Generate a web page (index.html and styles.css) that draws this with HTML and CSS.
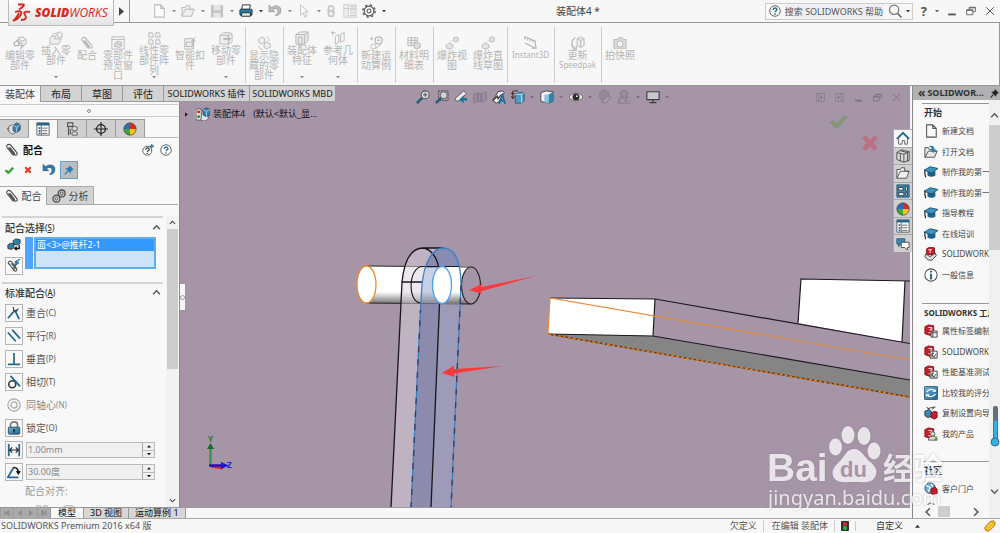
FILE: index.html
```html
<!DOCTYPE html>
<html lang="zh-CN">
<head>
<meta charset="utf-8">
<title>装配体4 *</title>
<link rel="stylesheet" href="styles.css">
</head>
<body>
<svg class="defs" aria-hidden="true">
  <defs>
    <linearGradient id="steel" x1="0" y1="0" x2="1" y2="1"><stop offset="0" stop-color="#6fb7dc"/><stop offset="1" stop-color="#1c6288"/></linearGradient>
    <symbol id="caret" viewBox="0 0 6 6"><path d="M0 1.500h6L3 5z" fill="currentColor"/></symbol>
    <symbol id="doc" viewBox="0 0 16 16"><path d="M3 1h7l4 4v10H3zM10 1v4h4" fill="#fbfbfb" stroke="currentColor" stroke-width="1.200"/></symbol>
    <symbol id="open" viewBox="0 0 16 16"><path d="M1 14V4h4l1-2h4v4h5l-3 8zM1 14l4-8h10" fill="#eee" stroke="currentColor" stroke-width="1.100"/></symbol>
    <symbol id="open-blue" viewBox="0 0 16 16"><path d="M1 14V3h4l1 2h5v2h4l-3 7zM1 14l4-7h10" fill="#e8e8e8" stroke="#555" stroke-width="1.100"/><path d="M6 1c4-1 6 1 6 4h2l-3 4-4-4h2c0-2-1-3-3-3z" fill="#2a7fae"/></symbol>
    <symbol id="save" viewBox="0 0 16 16"><path d="M1 1h13l1 1v13H1z" fill="#c2c2c2"/><path d="M4 1h8v6H4zM4 10h8v5H4z" fill="#e6e6e6"/></symbol>
    <symbol id="print" viewBox="0 0 16 16"><path d="M4 1h9l-1 5H3z" fill="#fff" stroke="#222"/><rect x="1" y="6" width="14" height="7" rx="1" fill="#2b7ba3" stroke="#173f55"/><path d="M3 10h10v4H3z" fill="#dfe7eb" stroke="#222"/></symbol>
    <symbol id="undo" viewBox="0 0 16 16"><path d="M1 1v8h7L5.500 6.500C9 4 12 6 11 9c-.5 2-1.500 3-3 4 4 1 7-2 7-6C15 2 9 0 4 4z" fill="currentColor" stroke="#0003"/></symbol>
    <symbol id="cursor" viewBox="0 0 16 16"><path d="M4 1v12l3-3 2 5 2-1-2-5h4z" fill="#fafafa" stroke="currentColor"/></symbol>
    <symbol id="lamp" viewBox="0 0 16 16"><rect x="4" y="1" width="8" height="14" rx="4" fill="#c8c8c8"/><circle cx="8" cy="5" r="2.200" fill="#eee"/><circle cx="8" cy="11" r="2.200" fill="#eee"/></symbol>
    <symbol id="list-gray" viewBox="0 0 16 16"><path d="M1 1h14v14H1zM6 1v14M1 5h14" fill="none" stroke="#c4c4c4"/><path d="M3 7h1M3 10h1M3 13h1M8 7h6M8 10h6M8 13h6M8 3h6" stroke="#bbb"/></symbol>
    <symbol id="gear" viewBox="0 0 16 16"><circle cx="8" cy="8" r="5.500" fill="none" stroke="#555" stroke-width="1.300"/><circle cx="8" cy="8" r="7" fill="none" stroke="#555" stroke-width="1.600" stroke-dasharray="2.700 2.800"/><circle cx="8" cy="8" r="2.200" fill="none" stroke="#555" stroke-width="1.200"/></symbol>
    <symbol id="help" viewBox="0 0 16 16"><circle cx="8" cy="8" r="7" fill="#fff" stroke="#555" stroke-width="1.200"/><path d="M5.500 6.500c0-3.300 5-3.300 5-.5 0 1.800-2.400 1.800-2.400 3.700M8 11v2" fill="none" stroke="currentColor" stroke-width="1.900"/></symbol>
    <symbol id="help-new" viewBox="0 0 16 16"><circle cx="7" cy="9" r="6" fill="#fff" stroke="#555" stroke-width="1.200"/><path d="M5 7.500c0-3 4.500-3 4.500-.3 0 1.500-2.300 1.500-2.300 3.300M7 11.800v1.600" fill="none" stroke="#333" stroke-width="1.600"/><path d="M13 0v6M10 3h6" stroke="#2a7fae" stroke-width="1.800"/></symbol>
    <symbol id="search" viewBox="0 0 16 16"><circle cx="7" cy="6.500" r="5.300" fill="none" stroke="#777" stroke-width="1.400"/><path d="M10.500 10.500l5 5" stroke="#777" stroke-width="2"/></symbol>
    <symbol id="min" viewBox="0 0 16 16"><path d="M2 12h12v3H2z" fill="currentColor"/></symbol>
    <symbol id="restore" viewBox="0 0 16 16"><path d="M5 6V2h10v7h-4M1 6h10v8H1zM5 3h10M1 7h10" fill="none" stroke="currentColor" stroke-width="1.300"/></symbol>
    <symbol id="close" viewBox="0 0 16 16"><path d="M2 2l12 12M14 2L2 14" stroke="currentColor" stroke-width="1.600"/></symbol>
    <symbol id="clip" viewBox="0 0 16 16"><path d="M4 5l6.500 8c2 2 4.500 0 3-2L7 3C4.500 0 .5 2.500 2.500 5.500l6 7.500c1 1.500 3 0 2-1.500L5.500 5" fill="none" stroke="currentColor" stroke-width="1.200"/></symbol>
    <symbol id="r-edit" viewBox="0 0 16 16"><path d="M6 2l5-1 4 3v5l-5 3-4-3zM6 3l4 3 5-2M10 6v6" fill="#eee" stroke="currentColor"/><path d="M1 8l4-3 3 3-2 3H2zM8 15l4-4" fill="none" stroke="currentColor" stroke-width="1.500"/></symbol>
    <symbol id="r-insert" viewBox="0 0 16 16"><path d="M9 2l4-1 2 2v4l-3 1-3-2zM1 15V8l2-2h5l-2 3h8l-3 6z" fill="#eee" stroke="currentColor"/><path d="M4 6c0-3 1-3 4-3" fill="none" stroke="currentColor"/></symbol>
    <symbol id="r-preview" viewBox="0 0 16 16"><path d="M1 1h14v14H1zM1 4h14" fill="none" stroke="currentColor"/><path d="M4 9l3-3 5 1v5l-3 1-5-1zM7 6v3h5" fill="#ddd" stroke="currentColor"/></symbol>
    <symbol id="r-pattern" viewBox="0 0 16 16"><path d="M2 2h4l1 2v3H2zM10 2h4l1 2v3h-5zM2 10h4l1 2v3H2zM10 10h4l1 2v3h-5z" fill="#eee" stroke="currentColor"/></symbol>
    <symbol id="r-smart" viewBox="0 0 16 16"><path d="M2 3h10v12H2zM4 7h7v5H4z" fill="#eee" stroke="currentColor"/><path d="M15 0L9 6h3l-4 5 7-6h-3z" fill="currentColor"/></symbol>
    <symbol id="r-move" viewBox="0 0 16 16"><path d="M1 5l4-3h8l2 2v8l-3 3H1zM1 5h10v10M11 5l4-2" fill="#eee" stroke="currentColor"/><path d="M5 8h5V6l4 3-4 3v-2H5z" fill="currentColor"/></symbol>
    <symbol id="r-show" viewBox="0 0 16 16"><path d="M2 4l3-3 4 2v4L5 9 2 7zM8 9l3-2 4 2v4l-4 2-3-2z" fill="#eee" stroke="currentColor"/><path d="M11 1c3 1 3 3 2 5M2 11c0 3 2 4 4 4" fill="none" stroke="currentColor"/></symbol>
    <symbol id="r-feature" viewBox="0 0 16 16"><path d="M1 4l5-3h9v10l-4 4H1zM1 4h10l4-3M11 4v11M4 7h4v8H4z" fill="#e6e6e6" stroke="currentColor"/></symbol>
    <symbol id="r-ref" viewBox="0 0 16 16"><path d="M2 0v5M0 2h5M5 6l4-2v9l-4 2zM11 4l4-2v9l-4 2z" fill="none" stroke="currentColor"/></symbol>
    <symbol id="r-motion" viewBox="0 0 16 16"><circle cx="11" cy="5" r="4" fill="none" stroke="currentColor" stroke-width="1.400"/><circle cx="11" cy="5" r="1.300" fill="currentColor"/><circle cx="5" cy="12" r="3" fill="none" stroke="currentColor"/><path d="M3 1v4M1 3h4M8 14l6-5" stroke="currentColor"/></symbol>
    <symbol id="r-table" viewBox="0 0 16 16"><path d="M1 2h11v9H1zM1 5h11M1 8h11M5 2v9M9 2v9" fill="none" stroke="currentColor"/><path d="M8 9l4-2 3 2v4l-4 2-3-2z" fill="#ddd" stroke="currentColor"/></symbol>
    <symbol id="r-explode" viewBox="0 0 16 16"><path d="M10 2l3-1 2 1v4l-3 1-2-1zM1 11l3-3 5 2v3l-3 2-4-1z" fill="#e4e4e4" stroke="currentColor"/><path d="M6 7l3-2" stroke="currentColor" stroke-dasharray="1 1"/></symbol>
    <symbol id="r-instant" viewBox="0 0 16 16"><path d="M1 4V1l12 5v4M4 2v3M7 4v2M10 5v2M1 8l12 6M9 14h5l-1-4" fill="none" stroke="currentColor" stroke-width="1.300"/></symbol>
    <symbol id="r-update" viewBox="0 0 16 16"><path d="M7 3l4-2 4 2v8l-4 2-4-2zM7 3l4 2 4-2M11 5v8" fill="#eee" stroke="currentColor"/><path d="M5 2C0 4 0 12 4 14M2 15h4v-4" fill="none" stroke="currentColor" stroke-width="1.500"/></symbol>
    <symbol id="r-camera" viewBox="0 0 16 16"><path d="M1 4h4l1-2h5l1 2h3v10H1z" fill="#ddd" stroke="currentColor"/><circle cx="8" cy="9" r="3.500" fill="#f7f7f7" stroke="currentColor"/></symbol>
    <symbol id="asm" viewBox="0 0 16 16"><path d="M6 3L2 5v6l4 3 4-2" fill="#ddd" stroke="#666"/><path d="M2 7L0 8l2 2" fill="none" stroke="#666"/><path d="M7 4l4-3 4 2v6l-4 3-4-2z" fill="#2f83b0" stroke="#444"/><path d="M7 4l4 2 4-3M11 6v6" fill="none" stroke="#a7d3ea"/></symbol>
    <symbol id="asm-tree" viewBox="0 0 16 16"><path d="M7 4l-2-1v12l5 1 4-2V7z" fill="#e4e4e4" stroke="#666"/><path d="M8 3l4-2 4 2v6l-4 2-4-2z" fill="#2f83b0" stroke="#345"/><path d="M8 3l4 2 4-2M12 5v6" fill="none" stroke="#a7d3ea"/><rect x="0" y="2" width="6" height="13" rx="2" fill="#efefef" stroke="#444"/><circle cx="3" cy="5.500" r="1.800" fill="#d8232a"/><circle cx="3" cy="11" r="1.800" fill="#2c9b3c"/></symbol>
    <symbol id="props" viewBox="0 0 16 16"><path d="M1 1h14v14H1z" fill="#fff" stroke="#555"/><path d="M1 1h14v3H1z" fill="#23698e"/><path d="M3 6h2v2H3zM3 9h2v2H3zM3 12h2v2H3z" fill="#23698e"/><path d="M7 7h6M7 10h6M7 13h6M6 4v11" stroke="#555"/></symbol>
    <symbol id="config" viewBox="0 0 16 16"><path d="M3 1h6v4H3zM4 5v10M6 8v6" fill="#ddd" stroke="#555" stroke-width="1.300"/><path d="M8 6l3-1 3 1v3l-3 1-3-1zM8 12l3-1 3 1v3H8z" fill="#ddd" stroke="#555"/></symbol>
    <symbol id="cross" viewBox="0 0 16 16"><circle cx="8" cy="8" r="5" fill="none" stroke="#222" stroke-width="1.500"/><path d="M8 0v16M0 8h16" stroke="#222" stroke-width="1.300"/></symbol>
    <symbol id="ball" viewBox="0 0 16 16"><circle cx="8" cy="8" r="7" fill="#f4c61c"/><path d="M8 8V1a7 7 0 0 0-7 7z" fill="#2a6ec4"/><path d="M8 8V1a7 7 0 0 1 7 7z" fill="#d92c22"/><path d="M8 8H1a7 7 0 0 0 7 7z" fill="#3ea53c"/><circle cx="8" cy="8" r="7" fill="none" stroke="#333" stroke-width=".8"/></symbol>
    <symbol id="check" viewBox="0 0 16 16"><path d="M1 9l3-2 3 3 6-7 3 2-8 9H6z" fill="currentColor"/></symbol>
    <symbol id="cancel" viewBox="0 0 16 16"><path d="M1 4l3-3 4 4 4-4 3 3-4 4 4 4-3 3-4-4-4 4-3-3 4-4z" fill="currentColor"/></symbol>
    <symbol id="pin" viewBox="0 0 16 16"><path d="M9 1l6 6-2 .5-2 2.500-.5 3L7 9.500 2 15l-1-1 5.500-5L3 5.500 6 5l2.500-2z" fill="currentColor" stroke="currentColor"/></symbol>
    <symbol id="gears" viewBox="0 0 16 16"><circle cx="11" cy="5" r="4" fill="#bbb" stroke="#444" stroke-width="1.300"/><circle cx="11" cy="5" r="1.500" fill="#eee" stroke="#444"/><circle cx="5" cy="11" r="4" fill="#ccc" stroke="#444" stroke-width="1.300"/><circle cx="5" cy="11" r="1.500" fill="#eee" stroke="#444"/></symbol>
    <symbol id="chev" viewBox="0 0 16 16"><path d="M2 11l6-6 6 6" fill="none" stroke="currentColor" stroke-width="2.500"/></symbol>
    <symbol id="entities" viewBox="0 0 16 16"><path d="M7 3l3-2 5 1v4l-3 2-5-1z" fill="#2f83b0" stroke="#333"/><path d="M1 8l3-2 4 1v4l-3 2-4-1z" fill="#2f83b0" stroke="#333"/><path d="M14 8v4H9M11 10l-2 2 2 2" fill="none" stroke="#111" stroke-width="1.500"/></symbol>
    <symbol id="multi" viewBox="0 0 16 16"><path d="M2 5l6 8c2 2 4 0 3-2L6 4C4 1 0 3 2 6M5 5l5 6M13 4l-5 5v5" fill="none" stroke="#555" stroke-width="1.300"/><path d="M15 0L9 3l1 2-3 2 6-2-1-2z" fill="#2a7fae" stroke="#2a7fae"/></symbol>
    <symbol id="m-coin" viewBox="0 0 16 16"><path d="M1 14L9 5M9 5l5 10" stroke="#26698c" stroke-width="2"/><path d="M7 1l1 5 4-2-2 3" fill="none" stroke="#444" stroke-width="1.300"/></symbol>
    <symbol id="m-par" viewBox="0 0 16 16"><path d="M1 4l9 10M6 1l9 10" stroke="#26698c" stroke-width="2"/></symbol>
    <symbol id="m-perp" viewBox="0 0 16 16"><path d="M8 1v12M1 14h14" stroke="#26698c" stroke-width="2"/></symbol>
    <symbol id="m-tan" viewBox="0 0 16 16"><circle cx="6" cy="10.500" r="4" fill="none" stroke="#333" stroke-width="1.800"/><path d="M4 1l11 12" stroke="#26698c" stroke-width="2"/></symbol>
    <symbol id="m-conc" viewBox="0 0 16 16"><circle cx="8" cy="8" r="7" fill="none" stroke="#aaa" stroke-width="1.400"/><circle cx="8" cy="8" r="3.500" fill="none" stroke="#aaa" stroke-width="1.400"/></symbol>
    <symbol id="m-lock" viewBox="0 0 16 16"><path d="M4 8V4c0-4 8-4 8 0v4" fill="none" stroke="#777" stroke-width="1.800"/><rect x="1.500" y="7" width="13" height="8" rx="1" fill="url(#steel)" stroke="#345"/><path d="M8 9v4" stroke="#111" stroke-width="1.500"/></symbol>
    <symbol id="m-dist" viewBox="0 0 16 16"><path d="M2 1v14M14 1v14" stroke="#26698c" stroke-width="2"/><path d="M4 8h8M6 5L3 8l3 3M10 5l3 3-3 3" fill="none" stroke="#222" stroke-width="1.300"/></symbol>
    <symbol id="m-ang" viewBox="0 0 16 16"><path d="M8 2L1 14h12" fill="none" stroke="#26698c" stroke-width="2"/><path d="M8 3c4 0 5 2 5 6M11 7l2 3 2-3" fill="none" stroke="#111" stroke-width="1.700"/></symbol>
    <symbol id="zoomfit" viewBox="0 0 16 16"><circle cx="10.500" cy="5.500" r="4.500" fill="#d9e3ea" stroke="#555" stroke-width="1.200"/><path d="M1 15l6-6" stroke="#245e7f" stroke-width="3"/><path d="M8 5.500h5M10.500 3v5" stroke="#333"/></symbol>
    <symbol id="zoomarea" viewBox="0 0 16 16"><path d="M4 1h11v11H4z" fill="none" stroke="#444" stroke-dasharray="2 1"/><circle cx="10" cy="6" r="4" fill="#cdd5dc" stroke="#555"/><path d="M1 15l6-6" stroke="#245e7f" stroke-width="3"/></symbol>
    <symbol id="prev" viewBox="0 0 16 16"><path d="M1 10L11 1l3 3-6 7-5 2z" fill="#e8e8e8" stroke="#555"/><path d="M15 9h-4V6l-5 5 5 4v-3h4z" fill="#1d6f9c"/></symbol>
    <symbol id="section" viewBox="0 0 16 16"><path d="M1 5l4-2v10l-4 2zM6 4h3v9H6zM10 4l5-2v10l-5 2z" fill="#9b90a0" stroke="#817589"/></symbol>
    <symbol id="dynanno" viewBox="0 0 16 16"><path d="M1 12L7 2l5-1 2 2-6 10-3 2z" fill="#eee" stroke="#333"/><path d="M1 12l5-5 1 3 4-5" fill="none" stroke="#333" stroke-width="1.500"/><path d="M8 16l4-10 3 10M9 12h5" fill="none" stroke="#1d6f9c" stroke-width="2"/></symbol>
    <symbol id="orient" viewBox="0 0 16 16"><path d="M5 5l4-2h6v9l-3 3H5z" fill="#4f9cc4" stroke="#2b5a73"/><path d="M5 5h7v10M12 5l3-2" fill="none" stroke="#c1e0ef"/><path d="M2 1v8M0 7l2 3 2-3M3 1h5M0 4h4" fill="none" stroke="#222"/></symbol>
    <symbol id="cube" viewBox="0 0 16 16"><path d="M1 3l6-2 8 1v11l-5 2-9-2z" fill="#f2f2f2" stroke="#444"/><path d="M5 5l5 .5V15l-5-1z" fill="#8cc3df"/><path d="M10 5l5-3v11l-5 2z" fill="#2f83b0"/></symbol>
    <symbol id="eye" viewBox="0 0 16 16"><path d="M0 8c4-6 12-6 16 0-4 6-12 6-16 0z" fill="#e9e6ea" stroke="#666"/><circle cx="8" cy="8" r="4" fill="#2c2c2c"/><circle cx="9" cy="7" r="1" fill="#fff"/></symbol>
    <symbol id="appear" viewBox="0 0 16 16"><circle cx="7" cy="6" r="5.500" fill="#978b99" stroke="#84798a"/><path d="M4 14l6-7 5 1-6 7z" fill="#a89bac" stroke="#84798a"/></symbol>
    <symbol id="scene" viewBox="0 0 16 16"><circle cx="8" cy="5" r="4.500" fill="#978b99" stroke="#84798a"/><path d="M1 15l2-6h10l2 6z" fill="#978b99" stroke="#84798a"/><path d="M3 9l6 6M9 9l-5 6M13 9l1 6" fill="none" stroke="#b5a8b8"/></symbol>
    <symbol id="monitor" viewBox="0 0 16 16"><path d="M1 2h14v9H1z" fill="#c5c9cc" stroke="#3f3f3f" stroke-width="1.300"/><path d="M8 11v3M4 14.500h8" stroke="#3f3f3f" stroke-width="1.500"/></symbol>
    <symbol id="panel-l" viewBox="0 0 16 16"><path d="M1 1h14v14H1zM5 1v14" fill="none" stroke="currentColor"/><path d="M11 5v6L7 8z" fill="currentColor"/></symbol>
    <symbol id="home" viewBox="0 0 16 16"><path d="M3 8v7h4v-4h3v4h3V8" fill="#fff" stroke="#555"/><path d="M1 9l7-7 7 7" fill="none" stroke="#26698c" stroke-width="2.200"/></symbol>
    <symbol id="books" viewBox="0 0 16 16"><path d="M1 4l5-3 4 1 5 1v10l-6 2-8-3zM1 4l8 2v9M5 2l8 2v10M9 6l6-3M5 5v9" fill="#ddd" stroke="#444"/></symbol>
    <symbol id="pal" viewBox="0 0 16 16"><path d="M1 1h14v14H1z" fill="#3c87af" stroke="#25556e"/><path d="M3 4h5v3H3zM11 3h2v5h-2zM3 10h6v3H3zM11 10h2v3h-2z" fill="#fff" stroke="#333"/></symbol>
    <symbol id="chat" viewBox="0 0 16 16"><path d="M1 2h9v6H5l-2 3V8H1z" fill="#3b89b2" stroke="#25556e"/><path d="M6 6h9v6h-2v3l-3-3H6z" fill="#fff" stroke="#444"/></symbol>
    <symbol id="hat" viewBox="0 0 16 16"><path d="M4 7v5c3 2 6 2 9 0V7z" fill="#1f5f85"/><path d="M0 6l7-4 9 2-7 5z" fill="#3d93c0" stroke="#1d4f6d"/><path d="M1 6v4l1 4" fill="none" stroke="#222" stroke-width="1.300"/></symbol>
    <symbol id="swred" viewBox="0 0 16 16"><path d="M1 3l4-2 6 1v8l-4 3-6-2z" fill="#c8202b" stroke="#7b1118"/><path d="M5 4h4v2H7v1h2v3H5" fill="none" stroke="#fff"/></symbol>
    <symbol id="sw-hand" viewBox="0 0 16 16"><path d="M3 2l4-2 5 1v6l-3 2-6-1z" fill="#c8202b" stroke="#7b1118"/><path d="M5 3h4M7 3v4" stroke="#fff"/><path d="M2 8l5 3 6-4 1 3-5 5H5l-4-4z" fill="#ddd" stroke="#333"/></symbol>
    <symbol id="sw-table" viewBox="0 0 16 16"><use href="#swred"/><path d="M8 8h7v7H8zM8 10h7M10 8v7" fill="#eee" stroke="#444"/></symbol>
    <symbol id="sw-rx" viewBox="0 0 16 16"><use href="#swred"/><path d="M7 7h8v8H7z" fill="#fff" stroke="#333"/><path d="M9 14V9h2l-2 3 4 2M11 14l3-4" fill="none" stroke="#333"/></symbol>
    <symbol id="info" viewBox="0 0 16 16"><circle cx="8" cy="8" r="7" fill="#fff" stroke="#555" stroke-width="1.200"/><path d="M8 3v2M8 6.500V13" stroke="#26698c" stroke-width="2.400"/></symbol>
    <symbol id="compare" viewBox="0 0 16 16"><rect x=".5" y=".5" width="15" height="15" rx="1" fill="url(#steel)" stroke="#25556e"/><path d="M3 7c2-4 8-4 9-1M13 9c-2 4-8 4-9 1M10 6h3V4M6 10H3v2" fill="none" stroke="#fff" stroke-width="1.400"/></symbol>
    <symbol id="sw-copy" viewBox="0 0 16 16"><path d="M1 6l5-2 3 3v5l-5 1-3-2z" fill="#3b89b2" stroke="#234"/><path d="M8 8l4-2 3 1v6l-3 2-4-2z" fill="#c8202b" stroke="#7b1118"/><path d="M4 3l8-2M3 1l3 3M9 4l4-3" stroke="#333"/></symbol>
    <symbol id="sw-user" viewBox="0 0 16 16"><use href="#swred"/><circle cx="10" cy="8" r="2.500" fill="#ddd" stroke="#555"/><path d="M5 15c0-6 10-6 10 0z" fill="#ddd" stroke="#555"/><path d="M11 15l4-5v5z" fill="#5a9a4c"/></symbol>
    <symbol id="portal" viewBox="0 0 16 16"><circle cx="7" cy="7" r="6" fill="#6fb0d4" stroke="#345"/><path d="M2 4l5 2-2 5M8 2l2 3" fill="none" stroke="#fff" stroke-width="1.500"/><path d="M8 8l4-2 3 2v5l-3 2-4-2z" fill="#c8202b" stroke="#7b1118"/></symbol>
    <symbol id="group" viewBox="0 0 16 16"><circle cx="8" cy="5" r="4" fill="#eee" stroke="#555"/><path d="M2 15c0-8 12-8 12 0z" fill="#ddd" stroke="#555"/></symbol>
    <symbol id="tag" viewBox="0 0 16 16"><path d="M1 10L8 2l5-1 2 3-2 5-7 6-4-1z" fill="#f2b91d" stroke="#95690c"/><path d="M4 10l6-6M7 12l5-5" stroke="#fbe28c"/></symbol>
    <symbol id="nav-next" viewBox="0 0 16 16"><path d="M5 3v10l6-5z" fill="#999" stroke="#777"/></symbol>
    <symbol id="nav-end" viewBox="0 0 16 16"><path d="M4 3v10l6-5zM12 3v10" fill="#999" stroke="#777" stroke-width="1.300"/></symbol>
  </defs>
</svg>

<header class="titlebar">
  <div class="brand">
    <svg class="brand-mark" viewBox="0 0 20 20" aria-hidden="true"><path d="M6 1.500h5c2 0 1 2-4 5M3 9c6-2 8 0 5 4-2 3-4 4-7 5 3-2 4-4 6-8M18 9c-5-1-7 0-5 3s1 5-4 5" fill="none" stroke="#d9261c" stroke-width="1.800"/></svg>
    <span class="brand-name"><b>SOLID</b>WORKS</span>
  </div>
  <button class="menu-arrow" aria-label="菜单"><svg viewBox="0 0 6 10"><path d="M0 0l6 5-6 5z" fill="#444"/></svg></button>
  <div class="quick">
    <button class="q dim" aria-label="新建"><svg><use href="#doc"/></svg><svg class="car"><use href="#caret"/></svg></button>
    <button class="q dim" aria-label="打开"><svg><use href="#open"/></svg><svg class="car"><use href="#caret"/></svg></button>
    <button class="q dim" aria-label="保存"><svg><use href="#save"/></svg><svg class="car"><use href="#caret"/></svg></button>
    <button class="q" aria-label="打印"><svg><use href="#print"/></svg><svg class="car"><use href="#caret"/></svg></button>
    <button class="q dim" aria-label="撤消"><svg><use href="#undo"/></svg><svg class="car"><use href="#caret"/></svg></button>
    <button class="q dim" aria-label="选择"><svg><use href="#cursor"/></svg><svg class="car"><use href="#caret"/></svg></button>
    <button class="q solo dim" aria-label="重建"><svg><use href="#lamp"/></svg></button>
    <button class="q solo dim" aria-label="属性"><svg><use href="#list-gray"/></svg></button>
    <button class="q" aria-label="选项"><svg><use href="#gear"/></svg><svg class="car"><use href="#caret"/></svg></button>
  </div>
  <h1 class="doc-title">装配体4 *</h1>
  <div class="search">
    <svg class="search-help"><use href="#help"/></svg>
    <input class="search-input" type="text" aria-label="搜索帮助" placeholder="搜索 SOLIDWORKS 帮助">
    <button class="q search-go" aria-label="搜索"><svg><use href="#search"/></svg><svg class="car"><use href="#caret"/></svg></button>
  </div>
  <div class="window-btns">
    <button class="ask" aria-label="帮助">?<svg class="car"><use href="#caret"/></svg></button>
    <button aria-label="最小化"><svg><use href="#min"/></svg></button>
    <button aria-label="还原"><svg><use href="#restore"/></svg></button>
    <button aria-label="关闭"><svg><use href="#close"/></svg></button>
  </div>
</header>

<nav class="ribbon" aria-label="命令">
  <div class="group">
    <button class="cmd"><svg><use href="#r-edit"/></svg><span>编辑零部件</span></button>
    <button class="cmd drop"><svg><use href="#r-insert"/></svg><span>插入零部件</span><svg class="car"><use href="#caret"/></svg></button>
    <button class="cmd narrow"><svg><use href="#clip"/></svg><span>配合</span></button>
    <button class="cmd"><svg><use href="#r-preview"/></svg><span>零部件预览窗口</span></button>
    <button class="cmd drop"><svg><use href="#r-pattern"/></svg><span>线性零部件阵列</span><svg class="car"><use href="#caret"/></svg></button>
    <button class="cmd"><svg><use href="#r-smart"/></svg><span>智能扣件</span></button>
    <button class="cmd drop"><svg><use href="#r-move"/></svg><span>移动零部件</span><svg class="car"><use href="#caret"/></svg></button>
  </div>
  <div class="group"><button class="cmd"><svg><use href="#r-show"/></svg><span>显示隐藏的零部件</span></button></div>
  <div class="group">
    <button class="cmd drop"><svg><use href="#r-feature"/></svg><span>装配体特征</span><svg class="car"><use href="#caret"/></svg></button>
    <button class="cmd drop"><svg><use href="#r-ref"/></svg><span>参考几何体</span><svg class="car"><use href="#caret"/></svg></button>
  </div>
  <div class="group"><button class="cmd"><svg><use href="#r-motion"/></svg><span>新建运动算例</span></button></div>
  <div class="group"><button class="cmd"><svg><use href="#r-table"/></svg><span>材料明细表</span></button></div>
  <div class="group">
    <button class="cmd"><svg><use href="#r-explode"/></svg><span>爆炸视图</span></button>
    <button class="cmd"><svg><use href="#r-explode"/></svg><span>爆炸直线草图</span></button>
  </div>
  <div class="group"><button class="cmd wide"><svg><use href="#r-instant"/></svg><small>Instant3D</small></button></div>
  <div class="group"><button class="cmd wide"><svg><use href="#r-update"/></svg><span>更新</span><small>Speedpak</small></button></div>
  <div class="group"><button class="cmd"><svg><use href="#r-camera"/></svg><span>拍快照</span></button></div>
</nav>

<main class="work">
  <div class="tabs" role="tablist">
    <button class="tab on" role="tab" aria-selected="true">装配体</button>
    <button class="tab" role="tab">布局</button>
    <button class="tab" role="tab">草图</button>
    <button class="tab" role="tab">评估</button>
    <button class="tab long" role="tab">SOLIDWORKS 插件</button>
    <button class="tab long" role="tab">SOLIDWORKS MBD</button>
  </div>

  <aside class="manager">
    <div class="grip"><i></i></div>
    <div class="mgr-tabs">
      <button aria-label="设计树"><svg><use href="#asm"/></svg></button>
      <button class="on" aria-label="属性"><svg><use href="#props"/></svg></button>
      <button aria-label="配置"><svg><use href="#config"/></svg></button>
      <button aria-label="尺寸"><svg><use href="#cross"/></svg></button>
      <button aria-label="外观"><svg><use href="#ball"/></svg></button>
    </div>
    <div class="pm-title">
      <svg><use href="#clip"/></svg><h2>配合</h2>
      <button aria-label="新增功能"><svg><use href="#help-new"/></svg></button>
      <button class="blue" aria-label="帮助"><svg><use href="#help"/></svg></button>
    </div>
    <div class="pm-actions">
      <button class="ok" aria-label="确定"><svg><use href="#check"/></svg></button>
      <button class="no" aria-label="取消"><svg><use href="#cancel"/></svg></button>
      <button class="back" aria-label="撤消"><svg><use href="#undo"/></svg></button>
      <button class="keep" aria-label="保持可见"><svg><use href="#pin"/></svg></button>
    </div>
    <div class="pm-tabs">
      <button class="on"><svg><use href="#clip"/></svg>配合</button>
      <button><svg><use href="#gears"/></svg>分析</button>
    </div>
    <div class="pm-scroll">
      <div class="pm-body">
        <section class="pm-sec">
          <h3>配合选择<small>(<u>S</u>)</small><svg><use href="#chev"/></svg></h3>
          <div class="select-row">
            <div class="select-icons">
              <svg><use href="#entities"/></svg>
              <button class="box" aria-label="多配合"><svg><use href="#multi"/></svg></button>
            </div>
            <i class="pick-color"></i>
            <ul class="picks" role="listbox" aria-label="要配合的实体"><li role="option" aria-selected="true">面&lt;3&gt;@推杆2-1</li></ul>
          </div>
        </section>
        <section class="pm-sec std">
          <h3>标准配合<small>(<u>A</u>)</small><svg><use href="#chev"/></svg></h3>
          <button class="mate"><span class="box"><svg><use href="#m-coin"/></svg></span>重合<small>(C)</small></button>
          <button class="mate"><span class="box"><svg><use href="#m-par"/></svg></span>平行<small>(R)</small></button>
          <button class="mate"><span class="box"><svg><use href="#m-perp"/></svg></span>垂直<small>(P)</small></button>
          <button class="mate"><span class="box"><svg><use href="#m-tan"/></svg></span>相切<small>(T)</small></button>
          <button class="mate" disabled><span class="box"><svg><use href="#m-conc"/></svg></span>同轴心<small>(N)</small></button>
          <button class="mate"><span class="box"><svg><use href="#m-lock"/></svg></span>锁定<small>(O)</small></button>
          <div class="mate value"><button class="box" aria-label="距离"><svg><use href="#m-dist"/></svg></button>
            <div class="spin"><input type="text" aria-label="距离值" value="1.00mm"><span><button aria-label="增加"><svg><use href="#caret"/></svg></button><button aria-label="减少"><svg><use href="#caret"/></svg></button></span></div></div>
          <div class="mate value"><button class="box" aria-label="角度"><svg><use href="#m-ang"/></svg></button>
            <div class="spin"><input type="text" aria-label="角度值" value="30.00度"><span><button aria-label="增加"><svg><use href="#caret"/></svg></button><button aria-label="减少"><svg><use href="#caret"/></svg></button></span></div></div>
          <p class="align">配合对齐:</p>
          <div class="align-icons"><svg><use href="#r-pattern"/></svg><svg><use href="#r-move"/></svg></div>
        </section>
      </div>
      <div class="vbar"><svg><use href="#chev"/></svg><i></i><svg class="down"><use href="#chev"/></svg></div>
    </div>
  </aside>

  <section class="viewport" aria-label="图形区域">
    <svg class="scene" viewBox="180 86 730 422" preserveAspectRatio="xMinYMin slice">
      <defs><linearGradient id="cyl" x1="0" y1="0" x2="0" y2="1"><stop offset="0" stop-color="#fff"/><stop offset=".68" stop-color="#fff"/><stop offset=".95" stop-color="#858585"/><stop offset="1" stop-color="#777"/></linearGradient></defs>
      <path d="M366 266H471V304L366 303z" fill="url(#cyl)"/>
      <path d="M366 266L471 267M366 303L471 304" stroke="#222" stroke-width="1.200"/>
      <ellipse cx="366.500" cy="284.500" rx="9.500" ry="18.500" fill="#fff" stroke="#ee8c28" stroke-width="1.300"/>
      <ellipse cx="471" cy="285.500" rx="9.500" ry="18.500" fill="#a695a7" stroke="#222" stroke-width="1.200"/>
      <path d="M391 508L402 282C404 262 410 249 422 248L443 248C432 250 423 264 422 290L411 508z" fill="#d9d1db" fill-opacity=".5"/>
      <path d="M411 508L422 290C424 264 432 248 443 248C455 248 461 262 461 285L451 508z" fill="#93a2c8" fill-opacity=".5"/>
      <path d="M411 508L420.500 304H440L431 508z" fill="#706f9f" fill-opacity=".38"/>
      <path d="M425 268C430 252 436 248 443 248C453 249 458 256 460 267z" fill="#7e86ad" fill-opacity=".7"/>
      <path d="M442 266.500H459Q461 275 461 287L460 304H442z" fill="url(#cyl)"/>
      <ellipse cx="442" cy="285" rx="9.500" ry="18.500" fill="#fff"/>
      <path d="M391 508L402 282C404 262 410 249 422 248C430 248 437 257 438.500 267M422 248H443M402 282H422M439.500 304L431 508" fill="none" stroke="#16161c" stroke-width="1.300"/>
      <path d="M423 266.500C408 266 407 303 421 303M423 266.500H459" fill="none" stroke="#16161c" stroke-width="1.100"/>
      <path d="M411 508L420.500 310L422 285C424 264 432 248 443 248C455 248 461 262 461 285L451 508" fill="none" stroke="#3b80c6" stroke-width="1.300"/>
      <path d="M411 508L420.500 310M461 285L451 508" fill="none" stroke="#323c5c" stroke-width="1.300" stroke-dasharray="6 7"/>
      <ellipse cx="442" cy="285" rx="9.500" ry="18.500" fill="none" stroke="#4f9fe8" stroke-width="1.300"/>
      <path d="M550 298L655 299L653 336L548 334z" fill="#fff"/>
      <path d="M548 334L653 336L910 380V397z" fill="#858585"/>
      <path d="M801 279L905 281L902 342L798 323z" fill="#fff"/>
      <path d="M550 298L655 299L653 336M655 299L910 343.500M653 336L910 380M548 334L653 336M798 323L801 279L910 281M905 281L902 342" fill="none" stroke="#1d1a1f" stroke-width="1.200"/>
      <path d="M910 360L550 298L548 334" fill="none" stroke="#e58d3c" stroke-width="1.200"/>
      <path d="M548 334L910 397" stroke="#4d3420" stroke-width="1.300"/><path d="M548 334L910 397" stroke="#ee8017" stroke-width="1.400" stroke-dasharray="3 2"/>
      <path d="M469 290L483 283.500L481 287L536 276L480.500 291.500L482 294zM442 373L454 365.500V369L503 366L454.500 373.500V377z" fill="#fb3b3b"/>
      <path d="M210.500 464V448" stroke="#2f9a4b" stroke-width="2.500"/><path d="M207 449L210.500 443L214 449z" fill="#176b23"/>
      <path d="M211 466L223 468" stroke="#d8232a" stroke-width="3"/><path d="M209 465.500H223" stroke="#1616c8" stroke-width="2.500"/><path d="M221 462L229 465.500L221 469z" fill="#1a1ad2"/>
      <text class="axis ax-y" x="208" y="442">Y</text><text class="axis ax-z" x="227" y="468">Z</text>
    </svg>
    <div class="tree"><svg class="twist" viewBox="0 0 4 6"><path d="M0 0l4 3-4 3z" fill="#222"/></svg><svg class="tree-ic"><use href="#asm-tree"/></svg><span>装配体4</span><span>(默认&lt;默认_显...</span></div>
    <div class="headsup">
      <button aria-label="整屏显示"><svg><use href="#zoomfit"/></svg></button>
      <button aria-label="局部放大"><svg><use href="#zoomarea"/></svg></button>
      <button aria-label="上一视图"><svg><use href="#prev"/></svg></button>
      <button aria-label="剖面视图"><svg><use href="#section"/></svg></button>
      <button aria-label="动态注解"><svg><use href="#dynanno"/></svg></button>
      <button class="dd" aria-label="视图定向"><svg><use href="#orient"/></svg><svg class="car"><use href="#caret"/></svg></button>
      <button class="dd" aria-label="显示样式"><svg><use href="#cube"/></svg><svg class="car"><use href="#caret"/></svg></button>
      <button class="dd" aria-label="隐藏项目"><svg><use href="#eye"/></svg><svg class="car"><use href="#caret"/></svg></button>
      <button aria-label="编辑外观"><svg><use href="#appear"/></svg></button>
      <button class="dd" aria-label="应用布景"><svg><use href="#scene"/></svg><svg class="car"><use href="#caret"/></svg></button>
      <button class="dd" aria-label="视图设定"><svg><use href="#monitor"/></svg><svg class="car"><use href="#caret"/></svg></button>
    </div>
    <div class="doc-btns">
      <button aria-label="左面板"><svg><use href="#panel-l"/></svg></button>
      <button class="flip" aria-label="右面板"><svg><use href="#panel-l"/></svg></button>
      <button aria-label="最小化"><svg><use href="#min"/></svg></button>
      <button aria-label="还原"><svg><use href="#restore"/></svg></button>
      <button aria-label="关闭"><svg><use href="#close"/></svg></button>
    </div>
    <div class="confirm"><svg class="yes"><use href="#check"/></svg><svg class="nope"><use href="#cancel"/></svg></div>
    <button class="splitter" aria-label="折叠面板"></button>
    <div class="pane-tabs">
      <button class="on" aria-label="资源"><svg><use href="#home"/></svg></button>
      <button aria-label="设计库"><svg><use href="#books"/></svg></button>
      <button class="files" aria-label="文件"><svg><use href="#open"/></svg></button>
      <button aria-label="视图调色板"><svg><use href="#pal"/></svg></button>
      <button aria-label="外观"><svg><use href="#ball"/></svg></button>
      <button aria-label="自定义属性"><svg><use href="#props"/></svg></button>
      <button aria-label="论坛"><svg><use href="#chat"/></svg></button>
    </div>
  </section>

  <div class="doc-tabs">
    <div class="nav-btns">
      <button class="flip" aria-label="首页"><svg><use href="#nav-end"/></svg></button><button class="flip" aria-label="上一页"><svg><use href="#nav-next"/></svg></button><button aria-label="下一页"><svg><use href="#nav-next"/></svg></button><button aria-label="末页"><svg><use href="#nav-end"/></svg></button>
    </div>
    <button class="dt on">模型</button><button class="dt">3D 视图</button><button class="dt">运动算例 1</button>
  </div>

  <aside class="taskpane">
    <header class="tp-head"><span class="dbl">«</span><span class="tp-name">SOLIDWOR...</span><button aria-label="固定"><svg><use href="#pin"/></svg></button></header>
    <div class="tp-main">
      <div class="tp-col">
        <div class="tp-list">
          <section class="start"><h4>开始</h4>
            <a href="#new"><svg class="ink"><use href="#doc"/></svg>新建文档</a>
            <a href="#open-doc"><svg><use href="#open-blue"/></svg>打开文档</a>
            <a href="#first"><svg><use href="#hat"/></svg>制作我的第一</a>
            <a href="#first2"><svg><use href="#hat"/></svg>制作我的第一</a>
            <a href="#tut"><svg><use href="#hat"/></svg>指导教程</a>
            <a href="#train"><svg><use href="#hat"/></svg>在线培训</a>
            <a href="#intro"><svg><use href="#sw-hand"/></svg>SOLIDWORK</a>
            <a href="#general"><svg><use href="#info"/></svg>一般信息</a>
          </section>
          <section class="tools"><h4>SOLIDWORKS 工具</h4>
            <a href="#prop"><svg><use href="#sw-table"/></svg>属性标签编制</a>
            <a href="#rx"><svg><use href="#sw-rx"/></svg>SOLIDWORK</a>
            <a href="#bench"><svg><use href="#sw-rx"/></svg>性能基准测试</a>
            <a href="#score"><svg><use href="#compare"/></svg>比较我的评分</a>
            <a href="#copy"><svg><use href="#sw-copy"/></svg>复制设置向导</a>
            <a href="#mine"><svg><use href="#sw-user"/></svg>我的产品</a>
          </section>
          <section class="social"><h4>社区</h4>
            <a href="#portal-page"><svg><use href="#portal"/></svg>客户门户</a>
            <a href="#groups"><svg><use href="#group"/></svg>用户组</a>
          </section>
        </div>
        <div class="hbar"><svg class="left"><use href="#chev"/></svg><i></i><svg class="right"><use href="#chev"/></svg></div>
      </div>
      <div class="tp-vbar"><svg><use href="#chev"/></svg><i></i>
        <svg class="thermo" viewBox="0 0 10 42"><rect x="3" y="1" width="5" height="34" rx="2" fill="#5c7080"/><rect x="4" y="16" width="3" height="20" fill="#32b1e2"/><circle cx="5" cy="37" r="4" fill="#32b1e2" stroke="#3c6d88"/></svg>
        <svg class="down"><use href="#chev"/></svg></div>
    </div>
  </aside>
</main>

<footer class="status">
  <span class="product">SOLIDWORKS Premium 2016 x64 版</span>
  <span class="cell">欠定义</span>
  <span class="cell">在编辑 装配体</span>
  <span class="cell light"><svg viewBox="0 0 8 10"><rect width="8" height="10" rx="1" fill="#333"/><circle cx="4" cy="3" r="2" fill="#e23"/><circle cx="4" cy="7" r="2" fill="#1c3"/></svg></span>
  <span class="custom">自定义<svg class="up"><use href="#caret"/></svg></span>
  <svg class="tag"><use href="#tag"/></svg>
</footer>

<svg class="watermark" viewBox="0 0 184 90" aria-hidden="true">
  <g class="wm-ink">
    <text class="wm-bai" x="3" y="59">Bai</text>
    <ellipse cx="71.500" cy="25" rx="6.500" ry="8.500"/><ellipse cx="84" cy="13" rx="6.500" ry="9"/><ellipse cx="100" cy="14" rx="6.500" ry="9"/><ellipse cx="110" cy="29" rx="6.500" ry="8.500"/>
    <path d="M90 27c7 0 9 6 14 11 6 5 10 9 8 15-3 9-12 7-21 7s-19 2-22-6c-2-7 3-11 8-16 5-6 6-11 13-11z"/>
    <text class="wm-cn" x="119" y="57">经验</text>
    <text class="wm-url" x="4" y="83">jingyan.baidu.com</text>
  </g>
  <text class="wm-du" x="76" y="55">du</text>
</svg>
</body>
</html>
```
FILE: styles.css
```css
* { box-sizing: border-box; }
html, body { height: 100%; }
body {
  margin: 0;
  display: flex;
  flex-direction: column;
  position: relative;
  overflow: hidden;
  background: #f7f7f7;
  color: #444;
  font: 10px/12px "Noto Sans", "Noto Sans CJK SC", sans-serif;
}
h1, h2, h3, h4, p, ul { margin: 0; padding: 0; font-size: inherit; list-style: none; }
button, input { font: inherit; color: inherit; border: 0; background: none; padding: 0; margin: 0; }
button { display: flex; align-items: center; justify-content: center; white-space: nowrap; }
svg { display: block; flex: none; width: 14px; height: 14px; }
a { color: inherit; text-decoration: none; }
small { font-size: 8px; }
.defs { position: absolute; width: 0; height: 0; }
.car { width: 4px; height: 4px; }
.flip { transform: scaleX(-1); }

/* Title bar */
.titlebar { display: flex; align-items: center; height: 23px; flex: none; border-bottom: 1px solid #999; position: relative; }
.brand {
  display: flex; align-items: center; gap: 3px;
  align-self: flex-start;
  width: 106px; height: 26px; margin-left: 8px; padding-left: 3px;
  border: 1px solid #bbb; border-top: 0;
  background: linear-gradient(#fff, #e4e4e4);
  position: relative; z-index: 3;
  flex: none;
}
.brand-mark { width: 20px; height: 20px; }
.brand-name { color: #d9261c; font: italic 12px/14px "Open Sans", sans-serif; }
.brand-name b { font-weight: 800; }
.menu-arrow { width: 16px; height: 22px; border-right: 1px solid #999; }
.menu-arrow svg { width: 5px; height: 9px; }
.quick { display: flex; align-items: center; margin-left: 22px; }
.q { gap: 6px; width: 29px; justify-content: flex-start; color: #333; }
.q.solo { width: 19px; }
.dim { color: #bbb; }
.dim .car { color: #888; }
.quick .q:nth-child(7) { margin-left: -2px; }
.doc-title { flex: 1; text-align: center; font-weight: 400; }
.search { display: flex; align-items: center; gap: 4px; width: 148px; height: 17px; padding-left: 3px; border: 1px solid #ccc; background: #f7f7f7; flex: none; }
.search-help { color: #26698c; width: 12px; height: 12px; }
.search-input { flex: 1; min-width: 0; height: 14px; background: #eef0f5; font-size: 9px; }
.search-input::placeholder { color: #555; opacity: 1; }
.search-go { width: 24px; gap: 4px; }
.window-btns { display: flex; align-items: center; gap: 9px; padding: 0 5px 0 8px; color: #555; }
.window-btns svg { width: 10px; height: 10px; }
.window-btns .car { width: 4px; height: 4px; }
.ask { font-weight: 700; font-size: 13px; gap: 8px; margin-right: -1px; }

/* Ribbon */
.ribbon { display: flex; height: 63px; flex: none; padding: 4px 0 2px 2px; border-bottom: 1px solid #999; border-right: 1px solid #999; color: #b5b5b5; }
.group { display: flex; padding-right: 1px; border-right: 1px solid #ccc; }
.group:last-child { border-right: 0; }
.cmd { flex-direction: column; justify-content: flex-start; width: 36px; padding: 9px 3px 0; line-height: 10px; white-space: normal; text-align: center; }
.cmd > svg { height: 14px; width: 14px; }
.cmd span { width: 30px; }
.cmd.drop { padding-top: 4px; }
.cmd .car { width: 4px; height: 4px; margin: auto 0 4px; color: #888; }
.cmd.narrow { width: 26px; }
.cmd.wide { width: 45px; }

/* Work area */
.work { flex: 1; min-height: 0; display: grid; grid-template: 16px minmax(0, 1fr) 11px / 180px minmax(0, 1fr) 90px; }
.tabs { grid-area: 1 / 1 / 2 / 3; justify-self: start; display: flex; z-index: 2; background: #d3d3d3; }
.tab { width: 41px; border: 1px solid #999; border-width: 0 1px 1px 0; color: #222; }
.tab.on { background: #f7f7f7; border-bottom: 0; color: #444; }
.tab.long { width: 86px; font-size: 9px; }

/* Property manager */
.manager { grid-area: 2 / 1 / 3 / 2; display: flex; flex-direction: column; min-height: 0; border-right: 1px solid #888; padding-right: 1px; background: #f8f8f8; }
.grip { height: 13px; margin-top: 2px; border: 1px solid #ccc; border-width: 1px 0; display: flex; align-items: center; justify-content: center; flex: none; }
.grip i { width: 4px; height: 4px; border: 1px solid #888; border-radius: 50%; }
.mgr-tabs { display: flex; margin-top: 2px; border-bottom: 1px solid #bbb; flex: none; }
.mgr-tabs button { width: 29px; height: 18px; background: #cfcfcf; border: 1px solid #999; border-width: 1px 1px 0 0; }
.mgr-tabs .on { background: #f8f8f8; margin-bottom: -1px; height: 19px; }
.pm-title { display: flex; align-items: center; gap: 4px; height: 23px; padding: 0 6px 0 5px; flex: none; color: #444; }
.pm-title h2 { flex: 1; color: #111; }
.pm-title button svg { width: 12px; height: 12px; margin-left: 2px; }
.blue { color: #2a7fae; }
.pm-actions { display: flex; align-items: center; height: 18px; padding-left: 4px; gap: 10px; flex: none; }
.pm-actions svg { width: 10px; height: 10px; }
.ok { color: #2f9e2b; }
.no { color: #dd3a22; }
.pm-actions .no svg { width: 8px; height: 8px; }
.pm-actions .back { color: #2f7ba5; }
.pm-actions .back svg { width: 14px; height: 14px; }
.keep { width: 18px; height: 18px; background: #bdbdbd; border: 1px solid #5fa3d1; color: #2582b8; margin-left: -6px; }
.pm-tabs { display: flex; margin-top: 7px; border-bottom: 1px solid #aaa; flex: none; }
.pm-tabs button { width: 47px; height: 18px; gap: 3px; border: 1px solid #aaa; border-width: 1px 1px 0 0; background: #d3d3d3; }
.pm-tabs .on { height: 19px; margin-bottom: -1px; background: #f8f8f8; }
.pm-scroll { display: flex; flex: 1; min-height: 0; margin-top: 11px; }
.pm-body { flex: 1; overflow: hidden; padding-left: 2px; }
.pm-sec { border-top: 2px solid #d4d4d4; padding-left: 3px; height: 66px; }
.pm-sec.std { height: auto; }
.pm-sec h3 { display: flex; align-items: center; height: 19px; font-weight: 500; color: #333; }
.pm-sec.std h3 { height: 17px; }
.pm-sec h3 svg { width: 9px; height: 9px; margin: 0 2px 0 auto; color: #555; }
.select-row { display: flex; padding-right: 7px; }
.select-icons { display: flex; flex-direction: column; gap: 4px; align-items: center; margin-right: 2px; }
.select-icons > svg { height: 16px; }
.box { display: flex; align-items: center; justify-content: center; width: 18px; height: 18px; border: 1px solid #b5b5b5; flex: none; }
.pick-color { width: 8px; height: 32px; background: #4ea5fb; margin-right: 1px; }
.picks { flex: 1; height: 32px; border: 2px solid #5fb0e6; background: #cfe3f6; font-size: 9px; }
.picks li { background: #3399fe; color: #fff; height: 12px; padding-left: 1px; }
.mate { display: flex; align-items: center; justify-content: flex-start; height: 23px; color: #555; }
.mate.value { height: 22px; }
.mate .box { margin-right: 3px; }
.mate:disabled { color: #888; }
.mate:disabled .box { border-color: transparent; }
.spin { display: flex; width: 129px; height: 16px; border: 1px solid #bbb; background: #f0f0f0; }
.spin input { flex: 1; min-width: 0; padding-left: 1px; color: #888; font-size: 9px; }
.spin span { display: flex; flex-direction: column; width: 12px; border-left: 1px solid #aaa; }
.spin button { flex: 1; border-top: 1px solid #bbb; color: #111; }
.spin button:first-child { border-top: 0; transform: scaleY(-1); }
.spin button svg { width: 4px; height: 4px; }
.align { padding: 1px 0 0 20px; color: #999; line-height: 14px; }
.align-icons { display: flex; gap: 12px; padding: 6px 0 0 30px; color: #aaa; }
.vbar { width: 12px; margin: 0 0 0 3px; display: flex; flex-direction: column; align-items: center; background: #f2f2f2; color: #444; }
.vbar svg { width: 7px; height: 13px; }
.vbar i { width: 11px; height: 140px; background: #cdcdcd; }
.down { transform: scaleY(-1); margin-top: auto; }

/* Graphics area */
.viewport { grid-area: 1 / 2 / 3 / 3; position: relative; background: #a695a7; }
.scene { width: 100%; height: 100%; }
.axis { font: 700 8px "Noto Sans", sans-serif; }
.ax-y { fill: #1c7b2a; }
.ax-z { fill: #2020e0; }
.tree { position: absolute; left: 5px; top: 21px; display: flex; align-items: center; gap: 8px; font-size: 9px; line-height: 14px; color: #111; }
.tree .twist { width: 3px; height: 5px; }
.tree-ic { margin-right: -5px; }
.headsup { position: absolute; left: 236px; top: 4px; display: flex; gap: 5px; }
.headsup .dd { gap: 5px; width: 24px; justify-content: flex-start; }
.headsup .car { color: #7b6c7e; }
.doc-btns { position: absolute; right: 9px; top: 7px; display: flex; gap: 10px; color: #796c7b; }
.doc-btns svg { width: 9px; height: 9px; }
.confirm { position: absolute; right: 31px; top: 25px; display: flex; gap: 13px; }
.confirm svg { width: 20px; height: 20px; }
.yes { color: #87957f; }
.confirm .nope { color: #ba7184; margin-top: 23px; width: 18px; height: 18px; }
.splitter { position: absolute; left: 0; top: 197px; width: 6px; height: 28px; background: #f7f7f7; border: 1px solid #999; border-left: 0; }
.splitter::after { content: ""; width: 3px; height: 3px; border: 1px solid #999; border-radius: 50%; }
.pane-tabs { position: absolute; right: -2px; top: 43px; height: 123px; display: flex; flex-direction: column; z-index: 1; }
.pane-tabs button { flex: 1; width: 19px; background: #d0d0d0; border: 1px solid #aaa; border-width: 1px 0 0 1px; }
.pane-tabs .on { background: #f7f7f7; }
.files { color: #555; }

/* Document tabs */
.doc-tabs { grid-area: 3 / 1 / 4 / 3; display: flex; background: #f7f7f7; border-top: 1px solid #999; }
.nav-btns { display: flex; width: 51px; background: #aaa; }
.nav-btns button { flex: 1; border-right: 1px solid #999; }
.nav-btns svg { width: 8px; height: 8px; }
.dt { padding: 0 6px; font-size: 9px; line-height: 10px; height: 10px; background: #d6d6d6; border-right: 1px solid #999; color: #111; }
.dt.on { background: #f7f7f7; padding: 0 7px; }

/* Task pane */
.taskpane { grid-area: 1 / 3 / 4 / 4; display: flex; flex-direction: column; min-height: 0; border-left: 1px solid #888; margin-left: 2px; background: #f8f8f8; }
.tp-head { display: flex; align-items: center; height: 14px; padding: 0 1px 0 5px; gap: 2px; background: #b1b1b4; color: #333; flex: none; font-size: 9px; font-weight: 700; }
.tp-head .dbl { font-size: 12px; }
.tp-name { flex: 1; }
.tp-head svg { width: 9px; height: 9px; color: #222; }
.tp-main { flex: 1; display: flex; min-height: 0; }
.tp-col { flex: 1; min-width: 0; display: flex; flex-direction: column; }
.tp-list { flex: 1; min-height: 0; overflow: hidden; padding: 3px 0 0 9px; }
.tp-list section { display: grid; grid-template-rows: 17px; grid-auto-rows: 1fr; border-top: 1px solid #999; }
.tp-list .start { height: 200px; padding-bottom: 18px; }
.tp-list .tools { height: 158px; padding-bottom: 17px; }
.tp-list .social { height: 58px; }
.tp-list h4 { line-height: 17px; padding-left: 2px; font-size: 9px; color: #333; white-space: nowrap; }
.tp-list .tools h4 { font-size: 8px; }
.tp-list a { display: flex; align-items: center; gap: 4px; padding-left: 2px; font-size: 8px; white-space: nowrap; color: #444; }
.tp-list .ink { color: #555; }
.hbar { display: flex; align-items: center; height: 13px; padding: 0 8px 0 10px; color: #555; flex: none; }
.hbar svg { width: 10px; height: 10px; }
.hbar i { width: 12px; height: 11px; background: #cdcdcd; margin-left: 5px; }
.hbar .left { transform: rotate(-90deg); }
.hbar .right { transform: rotate(90deg); margin-left: auto; }
.tp-vbar { width: 11px; display: flex; flex-direction: column; align-items: center; background: #f0f0f0; color: #555; padding: 11px 0 22px; }
.tp-vbar svg { width: 9px; height: 9px; }
.tp-vbar i { width: 11px; height: 125px; margin-top: 5px; background: #cdcdcd; }
.tp-vbar .thermo { width: 10px; height: 42px; margin: auto 0 0; }
.tp-vbar .down { margin-top: 40px; }

/* Status bar */
.status { display: flex; align-items: center; height: 15px; flex: none; border-top: 1px solid #aaa; color: #555; white-space: nowrap; font-size: 9px; }
.product { flex: 1; padding-left: 1px; }
.cell { padding: 0 6px 0 8px; border-right: 1px solid #ccc; }
.light { padding: 0 6px; }
.status .light svg { width: 8px; height: 10px; }
.custom { display: flex; align-items: center; gap: 12px; margin-left: 20px; color: #333; }
.status .up { width: 5px; height: 5px; transform: scaleY(-1); }
.tag { width: 12px; height: 12px; margin: 0 4px 0 64px; }

/* Watermark */
.watermark { position: absolute; right: 52px; bottom: 21px; width: 184px; height: 90px; z-index: 5; overflow: visible; pointer-events: none; }
.wm-ink { fill: #fff; opacity: .75; filter: drop-shadow(0 0 1px #77777799); }
.wm-bai { font: 700 39px "Liberation Sans", sans-serif; }
.wm-du { font: 700 22px "Liberation Sans", sans-serif; fill: #a695a7; }
.wm-cn { font: 700 30px "Noto Sans CJK SC", sans-serif; }
.wm-url { font: 400 20px "Noto Sans", sans-serif; }
```
